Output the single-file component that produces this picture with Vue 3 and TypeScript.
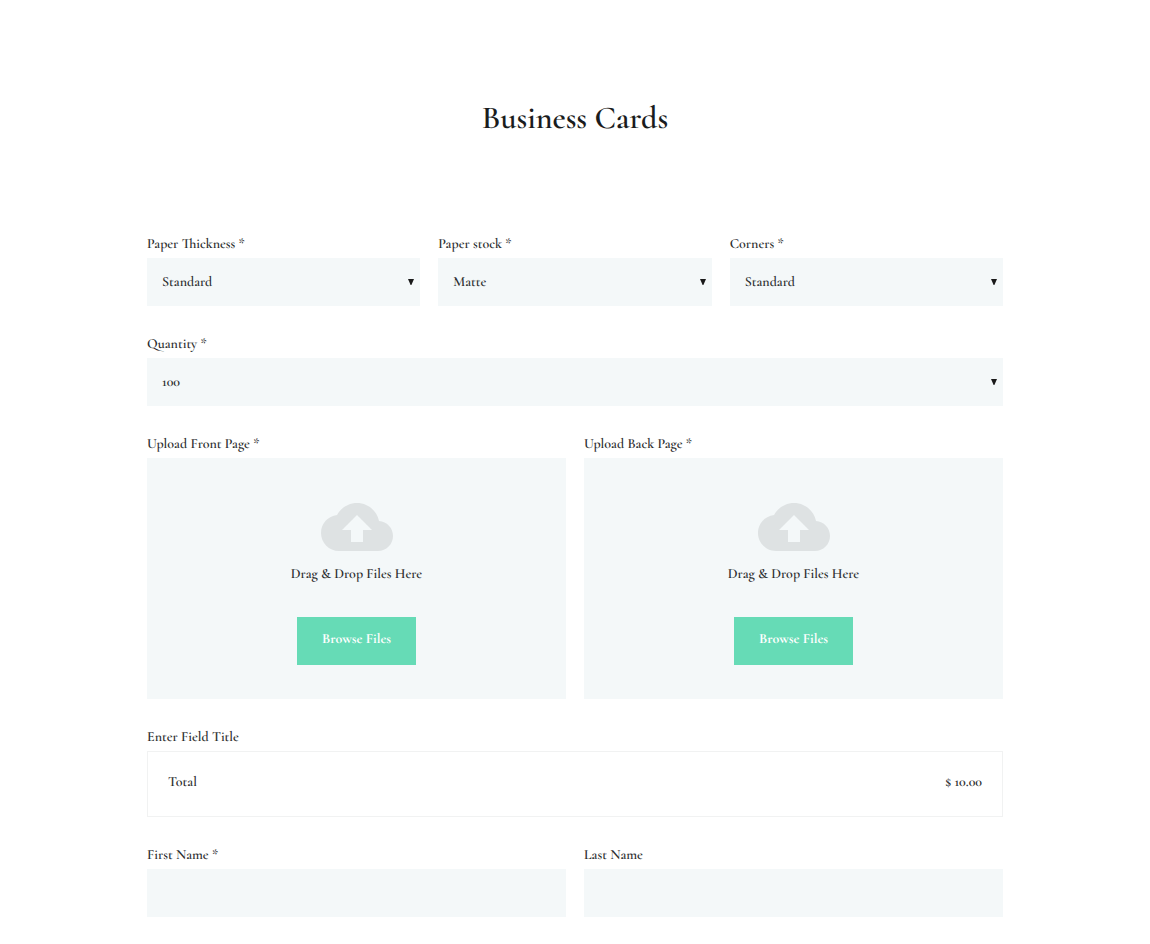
<script setup lang="ts">
import { reactive } from 'vue'

interface SelectField {
  id: string
  label: string
  options: string[]
  wide?: boolean
}

const selects: SelectField[] = [
  { id: 'thickness', label: 'Paper Thickness *', options: ['Standard'] },
  { id: 'stock', label: 'Paper stock *', options: ['Matte'] },
  { id: 'corners', label: 'Corners *', options: ['Standard'] },
  { id: 'quantity', label: 'Quantity *', options: ['100'], wide: true },
]

const uploads = [
  { id: 'front', label: 'Upload Front Page *' },
  { id: 'back', label: 'Upload Back Page *' },
]

const names = [
  { id: 'first', label: 'First Name *' },
  { id: 'last', label: 'Last Name' },
]

const form = reactive<Record<string, string>>({
  thickness: 'Standard',
  stock: 'Matte',
  corners: 'Standard',
  quantity: '100',
  first: '',
  last: '',
})
</script>

<template>
  <main class="page">
    <h1 class="title">Business Cards</h1>
    <form class="form" @submit.prevent>
      <div class="row thirds">
        <div v-for="f in selects" :key="f.id" class="field" :class="{ wide: f.wide }">
          <label class="label" :for="f.id">{{ f.label }}</label>
          <div class="select-box">
            <select :id="f.id" v-model="form[f.id]" class="control select">
              <option v-for="o in f.options" :key="o" :value="o">{{ o }}</option>
            </select>
            <svg class="arrow" width="6" height="6" viewBox="0 0 6 6" aria-hidden="true">
              <path d="M0 0h6L3.4 6h-.8z" />
            </svg>
          </div>
        </div>
      </div>

      <div class="row halves">
        <div v-for="u in uploads" :key="u.id" class="field" role="group" :aria-labelledby="u.id + '-label'">
          <span :id="u.id + '-label'" class="label">{{ u.label }}</span>
          <div class="drop">
            <svg class="cloud" width="72" height="48" viewBox="0 4 24 16" aria-hidden="true">
              <path
                d="M19.35 10.04C18.67 6.59 15.64 4 12 4 9.11 4 6.6 5.64 5.35 8.04 2.34 8.36 0 10.91 0 14c0 3.31 2.69 6 6 6h13c2.76 0 5-2.24 5-5 0-2.64-2.05-4.78-4.65-4.96zM14 13v4h-4v-4H7l5-5 5 5h-3z"
              />
            </svg>
            <span class="hint">Drag &amp; Drop Files Here</span>
            <button type="button" class="browse">Browse Files</button>
          </div>
        </div>
      </div>

      <div class="field">
        <span class="label">Enter Field Title</span>
        <div class="total">
          <span>Total</span>
          <span>$ 10.00</span>
        </div>
      </div>

      <div class="row halves">
        <div v-for="n in names" :key="n.id" class="field">
          <label class="label" :for="n.id">{{ n.label }}</label>
          <input :id="n.id" v-model="form[n.id]" class="control" type="text" />
        </div>
      </div>
    </form>
  </main>
</template>

<style>
body {
  margin: 0;
  background: #fff;
}
</style>

<style scoped>
.page {
  box-sizing: border-box;
  max-width: 896px;
  margin: 0 auto;
  padding: 99px 20px 27px;
  color: #2b2d2e;
  font-family: "Cormorant", "Cormorant Garamond", "Liberation Serif", serif;
  font-size: 14px;
  font-weight: 600;
  line-height: 22px;
  text-rendering: geometricPrecision;
}

.title {
  margin: 0 0 95px;
  color: #1a1c1d;
  font-size: 32px;
  font-weight: 600;
  line-height: 40px;
  text-align: center;
}

.form {
  display: flex;
  flex-direction: column;
  gap: 28px;
}

.row {
  display: grid;
  gap: 28px 18px;
}

.thirds {
  grid-template-columns: repeat(3, minmax(0, 1fr));
}

.halves {
  grid-template-columns: repeat(2, minmax(0, 1fr));
}

.wide {
  grid-column: 1 / -1;
}

.field {
  display: flex;
  flex-direction: column;
  gap: 2px;
}

.control {
  display: block;
  box-sizing: border-box;
  width: 100%;
  height: 48px;
  margin: 0;
  padding: 1px 15px 0;
  border: 0;
  border-radius: 0;
  background: #f4f8f9;
  color: inherit;
  font: inherit;
  text-rendering: inherit;
}

.select {
  appearance: none;
}

.select-box {
  position: relative;
}

.arrow {
  position: absolute;
  top: 21px;
  right: 6px;
  fill: #1a1a1a;
  pointer-events: none;
}

.drop {
  display: flex;
  flex-direction: column;
  align-items: center;
  padding: 45px 20px 34px;
  background: #f4f8f9;
}

.cloud {
  display: block;
  fill: #dee2e3;
}

.hint {
  margin: 13px 0 31px;
}

.browse {
  height: 48px;
  padding: 0 25px 2px;
  border: 0;
  background: #66dbb6;
  color: #fff;
  font: inherit;
  font-weight: 700;
  text-rendering: inherit;
  cursor: pointer;
}

.total {
  display: flex;
  justify-content: space-between;
  padding: 20px 20px 22px;
  border: 1px solid #f1f2f2;
}
</style>
